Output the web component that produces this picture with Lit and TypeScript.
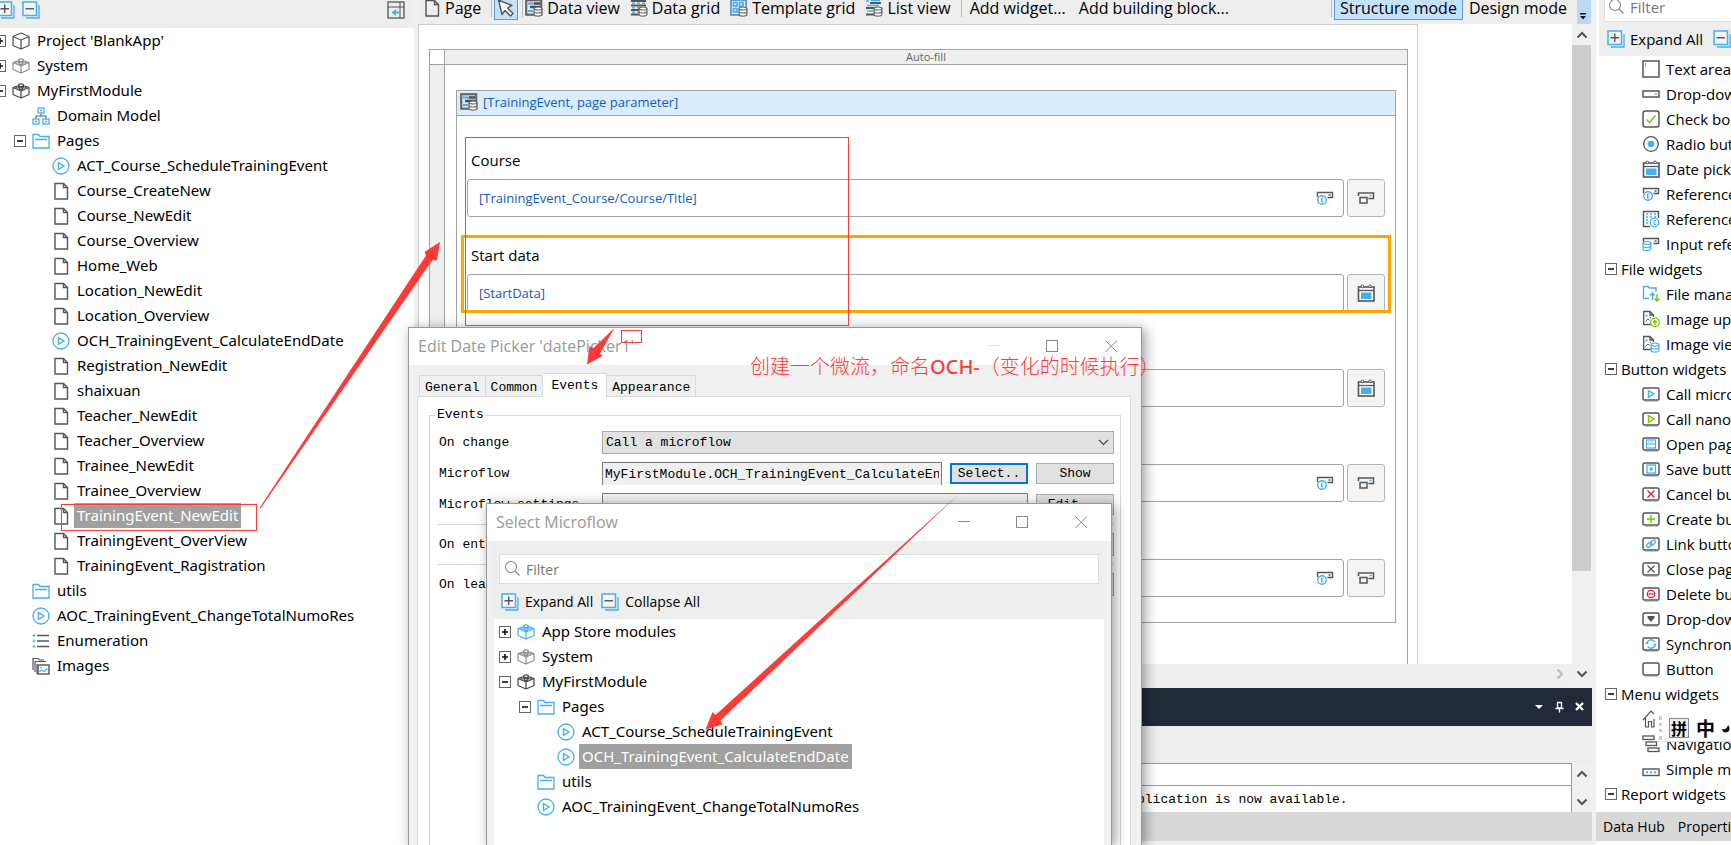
import { LitElement, html, svg, css, nothing } from "lit";
import { customElement, property } from "lit/decorators.js";
import { classMap } from "lit/directives/class-map.js";

const G = "#555555";
const B = "#45aef5";
const N = "#76c800";
const R = "#ec1c2c";

const frame = (inner: unknown) => svg`
  <path d="M3 16.500H16" stroke="#c8c8c8" stroke-width="1"/>
  <rect x="1" y="3" width="16" height="12" rx="1.500" fill="#fff" stroke=${G} stroke-width="1.500"/>${inner}`;
const brick = (c: string) => svg`
  <g stroke=${c} stroke-width="1.200" stroke-linejoin="round">
    <path d="M1 5.500L4.500 4.300M13.500 4.300L17 5.500V12.500L9 16L1 12.500V5.500L9 9L17 5.500M9 9V16"/>
    <ellipse cx="9" cy="3.200" rx="2.400" ry="1.300"/><path d="M6.600 3.200V5.200M11.400 3.200V5.200"/>
    <ellipse cx="5.500" cy="5" rx="1.800" ry="1"/><ellipse cx="12.500" cy="5" rx="1.800" ry="1"/>
    <ellipse cx="9" cy="6.700" rx="1.800" ry="1"/>
  </g>`;
const db = (x: number, y: number, c: string) => svg`
  <g transform="translate(${x} ${y})" stroke=${c} stroke-width="1.200" fill="#fff">
    <path d="M0.600 2V8C0.600 10.200 8.400 10.200 8.400 8V2"/>
    <ellipse cx="4.500" cy="2" rx="3.900" ry="1.500"/>
    <path d="M0.600 5C0.600 7 8.400 7 8.400 5" fill="none"/>
  </g>`;
const barTop = svg`<path d="M1.500 8V3.500H16.500V8.500H11.500" stroke=${G} stroke-width="1.400"/><path d="M12.500 6H14.500" stroke=${G} stroke-width="1.400"/>`;
const imgPage = svg`<path d="M9 14.500H1.700V1.500H8L11.500 5V7M8 1.500V5H11.500" stroke=${G} stroke-width="1.300"/>
  <path d="M3.500 11.500L6 9L7.500 10.500M7.500 7L9 8" stroke=${G}/><rect x="3.500" y="4.500" width="2" height="2" fill=${B}/>`;
const tri = (c: string) => svg`<path d="M6.500 5.700V12.300L12 9Z" stroke=${c} stroke-width="1.400"/>`;
const calendar = svg`<rect x="1.500" y="3" width="15.500" height="14" fill="#fff" stroke=${G} stroke-width="1.600"/>
  <path d="M1 6.500H17" stroke=${G} stroke-width="1.300"/><rect x="4" y="8.500" width="10.500" height="6.500" fill=${B}/>
  <circle cx="5.500" cy="2.300" r="1.300" fill="#fff" stroke=${G}/><circle cx="13" cy="2.300" r="1.300" fill="#fff" stroke=${G}/>`;
const refSel = (inner: unknown) => svg`${barTop}<circle cx="6" cy="11" r="4.300" fill="#fff" stroke=${B} stroke-width="1.400"/>${inner}`;
const letterE = svg`<path d="M7.500 9H5.500V13H7.500M5.500 11H7" stroke=${B}/>`;

const ICONS: Record<string, unknown> = {
  cube: svg`<path d="M9 1L17 4.500V13.500L9 17L1 13.500V4.500ZM1 4.500L9 8L17 4.500M9 8V17" stroke=${G} stroke-width="1.300" stroke-linejoin="round"/>`,
  brickGray: brick("#8c8c8c"),
  brickDark: brick("#484848"),
  brickBlue: brick(B),
  domain: svg`<g stroke=${B} stroke-width="1.300"><rect x="6" y="1" width="6" height="5"/><rect x="1" y="12" width="6" height="5"/><rect x="11" y="12" width="6" height="5"/><path d="M8 3.500H10M3 14.500H5M13 14.500H15"/></g><path d="M9 6.500V9M4 11.500V9H14V11.500" stroke=${G}/>`,
  folder: svg`<path d="M1 16V2.500H6.500L8 4.500H17V16ZM3 7.500H15" stroke=${B} stroke-width="1.300"/>`,
  flow: svg`<circle cx="9" cy="9" r="8" stroke=${B} stroke-width="1.300"/>${tri(B)}`,
  page: svg`<path d="M3 1.500H11.500L15.500 5.500V17H3ZM11.500 1.500V5.500H15.500" stroke=${G} stroke-width="1.400"/>`,
  list: svg`<path d="M5 3.500H17M5 9H17M5 14.500H17" stroke=${G} stroke-width="1.300"/><path d="M0.500 3.500H3.500M0.500 9H3.500M0.500 14.500H3.500M2 2V5M2 7.500V10.500M2 13V16" stroke=${B}/>`,
  images: svg`<path d="M1 13V1.500H6L7.500 3H12M3 15V4.500H14M5 17V7" stroke=${G} stroke-width="1.200"/><rect x="6" y="8" width="11" height="9" fill="#fff" stroke=${G} stroke-width="1.400"/><path d="M7 15L9.500 13L12 14.500L15.500 11.500" stroke=${B} stroke-width="1.200"/><circle cx="9" cy="10.500" r="0.900" fill=${B}/>`,
  dock: svg`<rect x="1" y="1" width="16" height="16" stroke=${G} stroke-width="1.300"/><path d="M1 6H17M13 1V17" stroke=${G}/><path d="M4.500 11.500L9 8V10.500H12V12.500H9V15Z" fill=${B}/>`,
  expand: svg`<path d="M4 17H17V4" stroke=${B} stroke-width="1.300"/><rect x="1" y="1" width="13.500" height="13.500" fill="#f4f4f4" stroke=${B} stroke-width="1.500"/><path d="M3.500 7.750H12M7.750 3.500V12" stroke=${G} stroke-width="1.400"/>`,
  collapse: svg`<path d="M4 17H17V4" stroke=${B} stroke-width="1.300"/><rect x="1" y="1" width="13.500" height="13.500" fill="#f4f4f4" stroke=${B} stroke-width="1.500"/><path d="M3.500 7.750H12" stroke=${G} stroke-width="1.400"/>`,
  cursor: svg`<path d="M1.500 1L5 15.500L8 11.500L13.500 17L16 14.500L10.500 9L15 6.500Z" fill="#f6fbff" stroke=${G} stroke-width="1.400" stroke-linejoin="round"/>`,
  dataView: svg`<rect x="1.200" y="1.200" width="15" height="14.500" fill="#dfe9ef" stroke="#666" stroke-width="2.200"/><path d="M3 4.500H9M3 12H8" stroke=${B} stroke-width="2.200"/><path d="M5 8H15M9 4.500H15" stroke="#4c4c4c" stroke-width="2.400"/>${db(8.5, 7.5, "#666")}`,
  dataGrid: svg`<path d="M1 2H16M1 6.500H16M1 11H9M1 15.500H9" stroke="#555" stroke-width="1.800"/><path d="M2 4.300H15M2 8.700H10M2 13.300H8" stroke=${B} stroke-dasharray="3 2" stroke-width="1.500"/>${db(8.5, 7.5, "#666")}`,
  template: svg`<rect x="1" y="1" width="15" height="15" stroke="#4c8fbd" stroke-width="1.600"/><rect x="3.500" y="3.500" width="3.500" height="3.500" stroke=${B} stroke-width="1.700"/><rect x="9.500" y="3.500" width="3.500" height="3.500" stroke=${B} stroke-width="1.700"/><rect x="3.500" y="9.500" width="3.500" height="3.500" stroke=${B} stroke-width="1.700"/>${db(8.5, 7.5, "#666")}`,
  listView: svg`<path d="M5 4H16M1 9H9M1 15.500H9" stroke="#555" stroke-width="1.900"/><path d="M1 2H4M6 1.500H15M2 6.500H14M2 12H8" stroke=${B} stroke-width="1.500"/>${db(8.5, 7.5, "#666")}`,
  search: svg`<circle cx="7" cy="7" r="5.500" stroke="#888" stroke-width="1.100"/><path d="M11 11L15.500 15.500" stroke="#888" stroke-width="1.200"/>`,
  textArea: svg`<rect x="1" y="1" width="16" height="16" stroke=${G} stroke-width="1.500"/><path d="M3.500 3V7" stroke=${B}/>`,
  dropDown: svg`<rect x="1" y="6" width="16" height="6" stroke=${G} stroke-width="1.500"/><path d="M12.500 9H15" stroke=${B} stroke-width="1.200"/>`,
  check: svg`<rect x="1" y="1" width="16" height="16" rx="2.500" stroke=${G} stroke-width="1.500"/><path d="M4.500 9.500L7.500 12.500L13.500 5.500" stroke=${N} stroke-width="1.400"/>`,
  radio: svg`<circle cx="9" cy="9" r="7.300" stroke=${G} stroke-width="1.300"/><circle cx="9" cy="9" r="3.300" fill=${B}/>`,
  calendar,
  refSelector: refSel(letterE),
  refSet: svg`<path d="M8 16.500H1.500V1.500H16.500V8" stroke=${G} stroke-width="1.400"/><path d="M4 4H14M4 7H14M4 10H8M4 13H7" stroke=${B} stroke-dasharray="2 2" stroke-width="1.500"/><circle cx="12.500" cy="12.500" r="4.300" fill="#fff" stroke=${B} stroke-width="1.300"/><path d="M14 10.500H12V14.500H14" stroke=${B}/>`,
  inputRef: svg`${barTop}${db(0.5, 6, B)}`,
  fileMgr: svg`<path d="M7 13.500H1.500V1.500H6L7.500 3H14V7" stroke=${B} stroke-width="1.400"/><path d="M10.500 15V8M8 10.500L10.500 8L12.500 10.500" stroke=${B} stroke-width="1.400"/><path d="M15 9V16M12.500 13.500L15 16L17.500 13.500" stroke=${N} stroke-width="1.400"/>`,
  imgUp: svg`${imgPage}<circle cx="13" cy="12.500" r="4.300" fill="#fff" stroke=${N} stroke-width="1.300"/><path d="M13 15V10.500M11 12.500L13 10.500L15 12.500" stroke=${N} stroke-width="1.200"/>`,
  imgView: svg`${imgPage}${db(8.5, 7.5, B)}`,
  bFlow: frame(tri(B)),
  bNano: frame(tri(N)),
  bOpen: frame(svg`<rect x="4.500" y="5" width="9" height="8" stroke=${B} stroke-width="1.200"/><path d="M4.500 9H13.500" stroke=${B}/><path d="M6 7H12" stroke=${B} stroke-dasharray="1 1"/>`),
  bSave: frame(svg`<rect x="5" y="5" width="8.500" height="8" stroke=${B} stroke-width="1.300"/><rect x="7.700" y="7.500" width="3" height="3" fill=${B}/>`),
  bCancel: frame(svg`<path d="M5.500 5.500L12.500 12.500M12.500 5.500L5.500 12.500" stroke=${R} stroke-width="1.400"/>`),
  bCreate: frame(svg`<path d="M9 5V13M5 9H13" stroke=${N} stroke-width="1.500"/>`),
  bLink: frame(svg`<g stroke=${B} stroke-width="1.300"><rect x="4.300" y="8" width="6" height="3.600" rx="1.800" transform="rotate(-40 7.300 9.800)"/><rect x="7.800" y="5.800" width="6" height="3.600" rx="1.800" transform="rotate(-40 10.800 7.600)"/></g>`),
  bClose: frame(svg`<path d="M5.500 5.500L12.500 12.500M12.500 5.500L5.500 12.500" stroke=${G} stroke-width="1.300"/>`),
  bDelete: frame(svg`<circle cx="9" cy="9" r="3.700" stroke=${R} stroke-width="1.300"/><path d="M6.500 9H11.500" stroke=${R} stroke-width="1.300"/>`),
  bDrop: frame(svg`<path d="M5.500 6H12.500V8L9 12L5.500 8Z" fill=${G}/>`),
  bSync: frame(svg`<path d="M5 8A4 4 0 0 1 12.500 7M13 10A4 4 0 0 1 5.500 11M3.700 8.500H6.500M11.500 9.500H14.500" stroke=${B} stroke-width="1.300"/>`),
  bPlain: frame(nothing),
  home: svg`<path d="M1 10L9 1L12 4M3.500 8V17H6.500V11.500H9.500V17H12V9" stroke=${G} stroke-width="1.200"/>`,
  navTree: svg`<rect x="1" y="1" width="11" height="3.500" stroke=${G} stroke-width="1.300"/><rect x="4" y="7" width="10.500" height="3.500" stroke=${G} stroke-width="1.300"/><rect x="6" y="13" width="11" height="3.500" stroke=${G} stroke-width="1.300"/>`,
  simple: svg`<rect x="1" y="9" width="16" height="6.500" stroke=${G} stroke-width="1.400"/><path d="M4 12.300H14.500" stroke=${B} stroke-width="2" stroke-dasharray="2 2"/>`,
  newRef: svg`<path d="M1.500 7V4H16.500V9.500H11.500" stroke=${G} stroke-width="1.500"/><rect x="3" y="8.500" width="7" height="5.500" stroke=${G} stroke-width="1.500"/><path d="M12.500 6.500H14.500" stroke=${B} stroke-width="1.300"/>`,
};

const icon = (name: string) => html`<svg class="icon" viewBox="0 0 18 18" width="18" height="18" fill="none" aria-hidden="true">${ICONS[name]}</svg>`;

const shared = css`
  :host { display: block; font-family: "Open Sans", "Noto Sans", sans-serif; font-size: 15px; color: #000; box-sizing: border-box; }
  *, *::before, *::after { box-sizing: border-box; }
  .icon { flex: none; display: block; }
  button, input, select { font: inherit; color: inherit; margin: 0; border-radius: 0; }
  .plain { display: flex; align-items: center; gap: 6px; border: 0; padding: 0; background: none; white-space: nowrap; }
`;

interface Node { level: number; label: string; icon: string; box?: "+" | "-"; selected?: boolean; }
const n = (level: number, ic: string, label: string, box?: "+" | "-", selected = false): Node => ({ level, icon: ic, label, box, selected });

const PROJECT: Node[] = [
  n(0, "cube", "Project 'BlankApp'", "+"),
  n(0, "brickGray", "System", "+"),
  n(0, "brickDark", "MyFirstModule", "-"),
  n(1, "domain", "Domain Model"),
  n(1, "folder", "Pages", "-"),
  n(2, "flow", "ACT_Course_ScheduleTrainingEvent"),
  ...["Course_CreateNew", "Course_NewEdit", "Course_Overview", "Home_Web", "Location_NewEdit", "Location_Overview"].map((t) => n(2, "page", t)),
  n(2, "flow", "OCH_TrainingEvent_CalculateEndDate"),
  ...["Registration_NewEdit", "shaixuan", "Teacher_NewEdit", "Teacher_Overview", "Trainee_NewEdit", "Trainee_Overview"].map((t) => n(2, "page", t)),
  n(2, "page", "TrainingEvent_NewEdit", undefined, true),
  n(2, "page", "TrainingEvent_OverView"),
  n(2, "page", "TrainingEvent_Ragistration"),
  n(1, "folder", "utils"),
  n(1, "flow", "AOC_TrainingEvent_ChangeTotalNumoRes"),
  n(1, "list", "Enumeration"),
  n(1, "images", "Images"),
];

const MICROFLOWS: Node[] = [
  n(0, "brickBlue", "App Store modules", "+"),
  n(0, "brickGray", "System", "+"),
  n(0, "brickDark", "MyFirstModule", "-"),
  n(1, "folder", "Pages", "-"),
  n(2, "flow", "ACT_Course_ScheduleTrainingEvent"),
  n(2, "flow", "OCH_TrainingEvent_CalculateEndDate", undefined, true),
  n(1, "folder", "utils"),
  n(1, "flow", "AOC_TrainingEvent_ChangeTotalNumoRes"),
];

const WIDGETS: [string, string][] = [
  ["textArea", "Text area"], ["dropDown", "Drop-down"], ["check", "Check box"], ["radio", "Radio buttons"],
  ["calendar", "Date picker"], ["refSelector", "Reference selector"], ["refSet", "Reference set selector"], ["inputRef", "Input reference set selector"],
  ["", "File widgets"], ["fileMgr", "File manager"], ["imgUp", "Image uploader"], ["imgView", "Image viewer"],
  ["", "Button widgets"], ["bFlow", "Call microflow button"], ["bNano", "Call nanoflow button"], ["bOpen", "Open page button"],
  ["bSave", "Save button"], ["bCancel", "Cancel button"], ["bCreate", "Create button"], ["bLink", "Link button"],
  ["bClose", "Close page button"], ["bDelete", "Delete button"], ["bDrop", "Drop-down button"], ["bSync", "Synchronize button"], ["bPlain", "Button"],
  ["", "Menu widgets"], ["home", ""], ["navTree", "Navigation tree"], ["simple", "Simple menu bar"], ["", "Report widgets"],
];

@customElement("tree-box")
class TreeBox extends LitElement {
  @property() sign: "+" | "-" = "-";
  static styles = css`
    :host { display: block; flex: none; width: 12px; height: 12px; }
    svg { display: block; }
  `;
  render() {
    return html`<svg width="12" height="12" viewBox="0 0 12 12" fill="none" aria-hidden="true">
      <rect x="0.5" y="0.5" width="11" height="11" fill="#fff" stroke="#666"/>
      <path d=${this.sign === "+" ? "M3 6H9M6 3V9" : "M3 6H9"} stroke="#111" stroke-width="1.6"/></svg>`;
  }
}

@customElement("doc-tree")
class DocTree extends LitElement {
  @property({ attribute: false }) nodes: Node[] = [];
  static styles = [shared, css`
    :host { font-family: "Noto Sans", "Open Sans", sans-serif; }
    ul { list-style: none; margin: 0; padding: 0; }
    li { display: flex; align-items: center; height: 25px; white-space: nowrap; }
    .slot { width: 12px; flex: none; }
    .icon { margin-left: 6px; }
    .lvl1 { padding-left: 20px; }
    .lvl2 { padding-left: 40px; }
    .name { margin-left: 4px; padding: 0 3px; line-height: 25px; }
    .selected { background: #a0a0a0; color: #fff; }
  `];
  render() {
    return html`<ul>${this.nodes.map((d) => html`
      <li class="lvl${d.level}">
        <span class="slot">${d.box ? html`<tree-box .sign=${d.box}></tree-box>` : nothing}</span>
        ${icon(d.icon)}
        <span class=${classMap({ name: true, selected: !!d.selected })}>${d.label}</span>
      </li>`)}</ul>`;
  }
}

@customElement("project-panel")
class ProjectPanel extends LitElement {
  static styles = [shared, css`
    :host { background: #fff; overflow: hidden; }
    .bar { display: flex; align-items: flex-start; gap: 7px; height: 28px; padding: 1px 9px 0 0; background: #eee; }
    .bar .plain:first-child { margin-left: -3px; }
    .bar .plain:last-child { margin-left: auto; }
    doc-tree { margin-left: -6px; }
  `];
  render() {
    return html`
      <div class="bar">
        <button class="plain" aria-label="Expand all">${icon("expand")}</button>
        <button class="plain" aria-label="Collapse all">${icon("collapse")}</button>
        <button class="plain" aria-label="Dock">${icon("dock")}</button>
      </div>
      <doc-tree .nodes=${PROJECT}></doc-tree>`;
  }
}

@customElement("page-editor")
class PageEditor extends LitElement {
  static styles = [shared, css`
    :host { display: flex; flex-direction: column; background: #f0f0f0; overflow: hidden; }
    .bar { display: flex; align-items: center; height: 24px; padding: 0 1px 8px 5px; background: #eee; flex: none; font-size: 16px; }
    .bar .plain { height: 24px; flex: none; gap: 4px; margin-right: 10px; }
    .bar .sep { width: 1px; height: 18px; background: #bbb; flex: none; margin-right: 2px; }
    .bar .words { margin: 0 7px 0 6px; }
    .bar .pointer { border: 1px solid #5b9bd9; background: #c5e2fd; width: 24px; padding: 0 2px; margin-right: 4px; }
    .bar .group { margin-left: auto; display: flex; align-items: center; }
    .bar .mode { border: 1px solid #5b9bd9; background: #c5e2fd; padding: 0 5px; margin-right: 6px; }
    .bar .more { width: 14px; height: 24px; border: 0; padding: 0; background: #b7d9f4; margin-top: 8px; }
    .work { flex: 1; display: flex; min-height: 0; }
    .main { flex: 1; display: flex; flex-direction: column; min-width: 0; }
    .canvas { flex: 1; min-height: 0; overflow: hidden; background: #fff; display: flex; padding-right: 154px; }
    .sheet { flex: 1; border: solid #ccc; border-width: 1px 1px 0 1px; padding: 24px 9px 0 10px; display: flex; }
    .grid { flex: 1; display: grid; grid-template: 15px 1fr / 15px 1fr; border: solid #a2a2a2; border-width: 1px 1px 0; }
    .corner { border: solid #a2a2a2; border-width: 0 1px 1px 0; }
    .top { background: #efefef; border-bottom: 1px solid #a2a2a2; text-align: center; font-size: 11px; line-height: 14px; color: #666; }
    .side { background: #efefef; border-right: 1px solid #a2a2a2; }
    .cell { padding: 25px 11px 0; }
    .view { border: 1px solid #a2a2a2; padding-bottom: 7px; }
    .head { display: flex; align-items: center; gap: 5px; height: 25px; padding: 0 3px 2px; background: #d9edfc; border-bottom: 1px solid #a2a2a2; color: #0f5cc0; font-size: 13px; margin-bottom: 24px; }
    .item { position: relative; height: 78px; margin: 0 4px 17px; padding: 10px 6px 0; }
    .item.on::after { content: ""; position: absolute; inset: 0; border: 3px solid #ffa500; }
    .item label { display: block; line-height: 20px; height: 29px; padding-left: 4px; font-size: 15px; }
    .pair { display: flex; gap: 3px; height: 38px; }
    .box { flex: 1; display: flex; align-items: center; border: 1px solid #a2a2a2; border-radius: 3px; background: #fff; padding-right: 9px; }
    .box input { flex: 1; border: 0; outline: 0; background: none; padding: 0 11px; font-size: 13px; color: #0f5cc0; height: 34px; }
    .pair button { width: 38px; border: 1px solid #b4b4b4; border-radius: 3px; background: #f4f4f4; display: flex; align-items: center; justify-content: center; padding: 0; }
    .hbar { height: 20px; background: #efefef; display: flex; justify-content: flex-end; align-items: center; padding-right: 6px; }
    .vbar { width: 20px; flex: none; display: flex; flex-direction: column; align-items: center; background: #f0f0f0; padding-right: 1px; }
    .thumb { flex: 1; width: 19px; background: #cdcdcd; margin-bottom: 92px; }
    .arrow { display: flex; align-items: center; justify-content: center; height: 21px; }
    .dark { margin-top: 4px; height: 38px; background: #222a39; display: flex; align-items: center; justify-content: flex-end; padding-right: 8px; flex: none; }
    .gap { height: 37px; background: #eee; flex: none; }
    .log { display: flex; height: 49px; flex: none; }
    .rows { flex: 1; border: 1px solid #999; border-width: 1px 1px 0 0; background: #fff; font-family: "Liberation Mono", monospace; font-size: 13px; }
    .rows div { height: 21px; }
    .rows p { margin: 0; border-top: 1px solid #999; line-height: 28px; padding-left: 719px; white-space: nowrap; }
    .log .vbar { justify-content: space-between; }
    .foot { height: 29px; background: #d8d8d8; flex: none; margin-bottom: 4px; }
  `];
  private field(id: string, label: string, value: string, kind: "ref" | "date", on = false) {
    return html`<div class=${classMap({ item: true, on })}>
      <label for=${id}>${label}</label>
      <div class="pair">
        <div class="box"><input id=${id} aria-label=${label || "Field"} .value=${value} readonly>${kind === "ref" ? icon("refSelector") : nothing}</div>
        <button aria-label="Select">${icon(kind === "ref" ? "newRef" : "calendar")}</button>
      </div></div>`;
  }
  private chevron(d: string, color = "#555") {
    return html`<svg width="12" height="12" viewBox="0 0 12 12" fill="none" aria-hidden="true"><path d=${d} stroke=${color} stroke-width="2"/></svg>`;
  }
  render() {
    const up = "M1.5 8.5L6 4L10.500 8.500";
    const down = "M1.5 3.500L6 8L10.500 3.500";
    return html`
      <div class="bar">
        <button class="plain">${icon("page")}Page</button><span class="sep"></span>
        <button class="plain pointer" aria-label="Pointer">${icon("cursor")}</button><span class="sep"></span>
        <button class="plain">${icon("dataView")}Data view</button>
        <button class="plain">${icon("dataGrid")}Data grid</button>
        <button class="plain">${icon("template")}Template grid</button>
        <button class="plain">${icon("listView")}List view</button><span class="sep"></span>
        <button class="plain words">Add widget...</button>
        <button class="plain words">Add building block...</button>
        <div class="group"><span class="sep"></span>
          <button class="plain mode">Structure mode</button>
          <button class="plain">Design mode</button>
          <button class="more" aria-label="More"><svg width="14" height="24" viewBox="0 0 14 24" aria-hidden="true"><path d="M3 13H9V14.500H3ZM3 16H9L6 19.500Z" fill="#111"/></svg></button>
        </div>
      </div>
      <div class="work">
        <div class="main">
          <div class="canvas"><div class="sheet"><div class="grid">
            <div class="corner"></div><div class="top">Auto-fill</div><div class="side"></div>
            <div class="cell"><div class="view">
              <div class="head">${icon("dataView")}[TrainingEvent, page parameter]</div>
              ${this.field("course", "Course", "[TrainingEvent_Course/Course/Title]", "ref")}
              ${this.field("start", "Start data", "[StartData]", "date", true)}
              ${this.field("f3", "", "", "date")}
              ${this.field("f4", "", "", "ref")}
              ${this.field("f5", "", "", "ref")}
            </div></div>
          </div></div></div>
          <div class="hbar">${this.chevron("M3.500 1.500L8 6L3.500 10.500", "#bbb")}</div>
        </div>
        <div class="vbar"><div class="arrow">${this.chevron(up)}</div><div class="thumb"></div><div class="arrow">${this.chevron(down)}</div></div>
      </div>
      <div class="dark"><svg width="49" height="12" viewBox="0 0 49 12" fill="none" aria-hidden="true">
        <path d="M0 4H8L4 8Z" fill="#fff"/><path d="M22.500 1.500H26.500V7H22.500ZM20.500 7.500H28.500M24.500 8V11.500" stroke="#fff" stroke-width="1.300"/>
        <path d="M41 2L48 9M48 2L41 9" stroke="#fff" stroke-width="2.300"/></svg></div>
      <div class="gap"></div>
      <div class="log"><div class="rows"><div></div><p>plication is now available.</p></div>
        <div class="vbar"><div class="arrow">${this.chevron(up)}</div><div class="arrow">${this.chevron(down)}</div></div></div>
      <div class="foot"></div>`;
  }
}

@customElement("toolbox-panel")
class ToolboxPanel extends LitElement {
  static styles = [shared, css`
    :host { display: flex; flex-direction: column; overflow: hidden; background: #fff; }
    .head { height: 56px; margin-left: 3px; background: #eee; padding-left: 5px; flex: none; }
    .filter { display: flex; align-items: center; height: 22px; background: #fff; border: solid #ddd; border-width: 0 0 1px 1px; padding: 0 0 7px 3px; gap: 4px; }
    input { border: 0; outline: 0; width: 100px; padding: 0; background: none; }
    input::placeholder { color: #767676; opacity: 1; }
    .tools { display: flex; gap: 10px; height: 33px; padding-left: 3px; align-items: center; }
    .tools .plain { flex: none; gap: 5px; }
    ul { flex: 1; list-style: none; margin: 0; padding: 0; }
    li { display: flex; align-items: center; height: 25px; padding-left: 46px; gap: 6px; white-space: nowrap; }
    .group { padding-left: 9px; gap: 4px; }
    nav { display: flex; gap: 13px; align-items: center; height: 29px; padding-left: 7px; background: #d8d8d8; margin-bottom: 4px; font-size: 14px; flex: none; }
    nav a { color: inherit; text-decoration: none; white-space: nowrap; }
  `];
  render() {
    return html`
      <div class="head">
        <div class="filter">${icon("search")}<input aria-label="Filter" placeholder="Filter"></div>
        <div class="tools"><button class="plain">${icon("expand")}Expand All</button><button class="plain" aria-label="Collapse all">${icon("collapse")}</button></div>
      </div>
      <ul>${WIDGETS.map(([ic, t]) => ic
        ? html`<li>${icon(ic)}${t}</li>`
        : html`<li class="group"><tree-box></tree-box>${t}</li>`)}</ul>
      <nav><a href="#hub">Data Hub</a><a href="#properties">Properties</a></nav>`;
  }
}

const windowButtons = (dim: boolean) => html`<svg width="130" height="14" viewBox="0 0 130 14" fill="none" aria-hidden="true">
  <path d="M0 6.500H12" stroke=${dim ? "#e4e4e4" : "#888"}/><rect x="58.500" y="1.500" width="11" height="11" stroke="#888"/>
  <path d="M117.500 1.500L129 13M129 1.500L117.500 13" stroke="#888"/></svg>`;

const dialogCss = css`
  :host { display: flex; flex-direction: column; background: #f0f0f0; border: 1px solid #999; border-bottom: 0; box-shadow: 3px 2px 12px rgba(0, 0, 0, 0.4); }
  header { display: flex; align-items: center; justify-content: space-between; height: 37px; padding: 0 23px 1px 9px; background: #fff; color: #999; flex: none; font-size: 16px; }
`;

@customElement("date-dialog")
class DateDialog extends LitElement {
  static styles = [shared, dialogCss, css`
    .body, .body button, .body input, .body select { font-family: "Liberation Mono", monospace; font-size: 13px; }
    .body { flex: 1; display: flex; flex-direction: column; padding: 8px 10px 0 8px; }
    .tabs { display: flex; align-items: flex-end; padding-left: 2px; height: 23px; flex: none; }
    .tabs button { height: 21px; padding: 2px 5px 0; border: 1px solid #d9d9d9; border-left-width: 0; border-bottom: 0; background: #f0f0f0; }
    .tabs button:first-child { border-left-width: 1px; }
    .tabs .on { height: 24px; padding: 0 8px; background: #fff; margin-bottom: -1px; position: relative; }
    .sheet { flex: 1; background: #fff; border: 1px solid #d9d9d9; border-bottom: 0; padding: 10px 9px 0 11px; }
    fieldset { margin: 0; border: 1px solid #d9d9d9; border-bottom: 0; padding: 4px 6px 0 7px; height: 100%; min-width: 0; }
    legend { padding: 0 2px; line-height: 16px; margin-left: -2px; }
    .row { display: grid; grid-template-columns: 165px 1fr; align-items: center; height: 31px; }
    .row.last { margin-bottom: 4px; }
    .row.tall { height: 40px; border-top: 1px solid #d9d9d9; }
    .row label { padding-left: 2px; }
    .line { display: flex; gap: 8px; align-items: center; }
    .combo { display: grid; align-items: center; }
    .combo select, .combo svg { grid-area: 1 / 1; }
    .combo svg { justify-self: end; margin-right: 5px; }
    select { appearance: none; height: 23px; border: 1px solid #acacac; background: #e1e1e1; padding: 0 3px; width: 100%; }
    input { flex: 1; min-width: 0; height: 23px; border: 1px solid #7a7a7a; border-bottom: 0; background: #f0f0f0; padding: 0 2px; outline: 0; }
    .line button { width: 78px; height: 21px; border: 1px solid #adadad; background: #e1e1e1; padding: 0; flex: none; }
    .line .focus { border: 2px solid #0078d7; }
  `];
  private combo(id: string, label: string, value: string, tall: boolean) {
    return html`<div class=${classMap({ row: true, tall })}><label for=${id}>${label}</label>
      <div class="combo"><select id=${id}><option>${value}</option></select>
      <svg width="11" height="7" viewBox="0 0 11 7" fill="none" aria-hidden="true"><path d="M1 1L5.500 5.500L10 1" stroke="#444" stroke-width="1.200"/></svg></div></div>`;
  }
  render() {
    return html`
      <header><span>Edit Date Picker 'datePicker1'</span>${windowButtons(true)}</header>
      <div class="body">
        <div class="tabs"><button>General</button><button>Common</button><button class="on">Events</button><button>Appearance</button></div>
        <div class="sheet"><fieldset><legend>Events</legend>
          ${this.combo("change", "On change", "Call a microflow", false)}
          <div class="row"><label for="flow">Microflow</label><div class="line"><input id="flow" .value=${"MyFirstModule.OCH_TrainingEvent_CalculateEndDate"} readonly><button class="focus">Select..</button><button>Show</button></div></div>
          <div class="row last"><label for="settings">Microflow settings</label><div class="line"><input id="settings" readonly><button>Edit...</button></div></div>
          ${this.combo("enter", "On enter", "", true)}
          ${this.combo("leave", "On leave", "", true)}
        </fieldset></div>
      </div>`;
  }
}

@customElement("microflow-dialog")
class MicroflowDialog extends LitElement {
  static styles = [shared, dialogCss, css`
    .body { flex: 1; display: flex; flex-direction: column; padding: 0 7px; background: #f0f0f0; }
    .head { background: #eee; padding: 13px 5px 0; height: 78px; flex: none; }
    .filter { display: flex; align-items: center; gap: 2px; height: 30px; border: 1px solid #ddd; background: #fff; padding: 0 4px; }
    input { flex: 1; border: 0; outline: 0; padding: 0 2px; background: none; font-size: 14px; }
    input::placeholder { color: #767676; opacity: 1; }
    .tools { display: flex; gap: 8px; padding: 0 2px; height: 35px; align-items: center; font-size: 14px; }
    .tree { flex: 1; background: #fff; padding-left: 5px; overflow: hidden; }
  `];
  render() {
    return html`
      <header><span>Select Microflow</span>${windowButtons(false)}</header>
      <div class="body">
        <div class="head">
          <div class="filter">${icon("search")}<input aria-label="Filter" placeholder="Filter"></div>
          <div class="tools"><button class="plain">${icon("expand")}Expand All</button><button class="plain">${icon("collapse")}Collapse All</button></div>
        </div>
        <div class="tree"><doc-tree .nodes=${MICROFLOWS}></doc-tree></div>
      </div>`;
  }
}

@customElement("app-root")
class AppRoot extends LitElement {
  static styles = [shared, css`
    :host { position: relative; height: 100vh; overflow: hidden; background: #f0f0f0; }
    .shell { display: grid; grid-template-columns: 414px 1fr 135px; column-gap: 4px; height: 100%; }
    date-dialog { position: absolute; left: 408px; top: 327px; width: 734px; bottom: 0; }
    microflow-dialog { position: absolute; left: 486px; top: 503px; width: 626px; bottom: 0; }
    .marks { position: absolute; left: 0; top: 0; pointer-events: none; }
    .note { position: absolute; left: 750px; top: 351px; margin: 0; font: 300 20px/30px "Noto Sans CJK SC", sans-serif; color: #ff3b38; white-space: nowrap; }
    .note b { font-family: "Noto Sans", sans-serif; font-weight: 500; }
    .ime { position: absolute; right: 0; top: 714px; width: 73px; height: 28px; display: flex; align-items: center; gap: 7px; background: #fff; border-bottom: 1px solid #ddd; overflow: hidden; font: 700 19px/20px "Noto Sans CJK SC", sans-serif; }
    .grip { width: 3px; height: 24px; margin-left: 1px; border-left: 3px dotted #ccc; flex: none; }
    .pin { border: 1px solid #888; background: #eee; width: 20px; height: 20px; line-height: 18px; font-size: 16px; text-align: center; flex: none; }
  `];
  render() {
    return html`
      <div class="shell"><project-panel></project-panel><page-editor></page-editor><toolbox-panel></toolbox-panel></div>
      <div class="ime"><span class="grip"></span><span class="pin">拼</span><span>中</span>
        <svg width="12" height="12" viewBox="0 0 12 12" aria-hidden="true"><path d="M0 7C3 9 7 7 8 2C12 6 10 12 5 12C2 12 0 10 0 7Z" fill="#111"/></svg></div>
      <date-dialog></date-dialog>
      <microflow-dialog></microflow-dialog>
      <svg class="marks" width="1200" height="845" viewBox="0 0 1200 845" fill="none" aria-hidden="true">
        <g stroke="#ff3b38"><rect x="465.500" y="137.500" width="383" height="188"/><rect x="61.500" y="504.500" width="195" height="26"/><rect x="621.500" y="330.500" width="20" height="12"/></g>
        <g fill="#ff3b38">
          <path d="M259.500 508L426 255.500L424.500 252L440 242L437 260.500L432.500 260L260.500 508.500Z"/>
          <path d="M614.500 328L593.500 348L589.500 346L587 364.500L602.500 356L600 353.500Z"/>
          <path d="M960 493L715.500 715L712.500 712L705.500 729.500L722.500 724.500L720.500 720.500Z"/>
        </g>
      </svg>
      <p class="note">创建一个微流，命名<b>OCH-</b>（变化的时候执行）</p>`;
  }
}
